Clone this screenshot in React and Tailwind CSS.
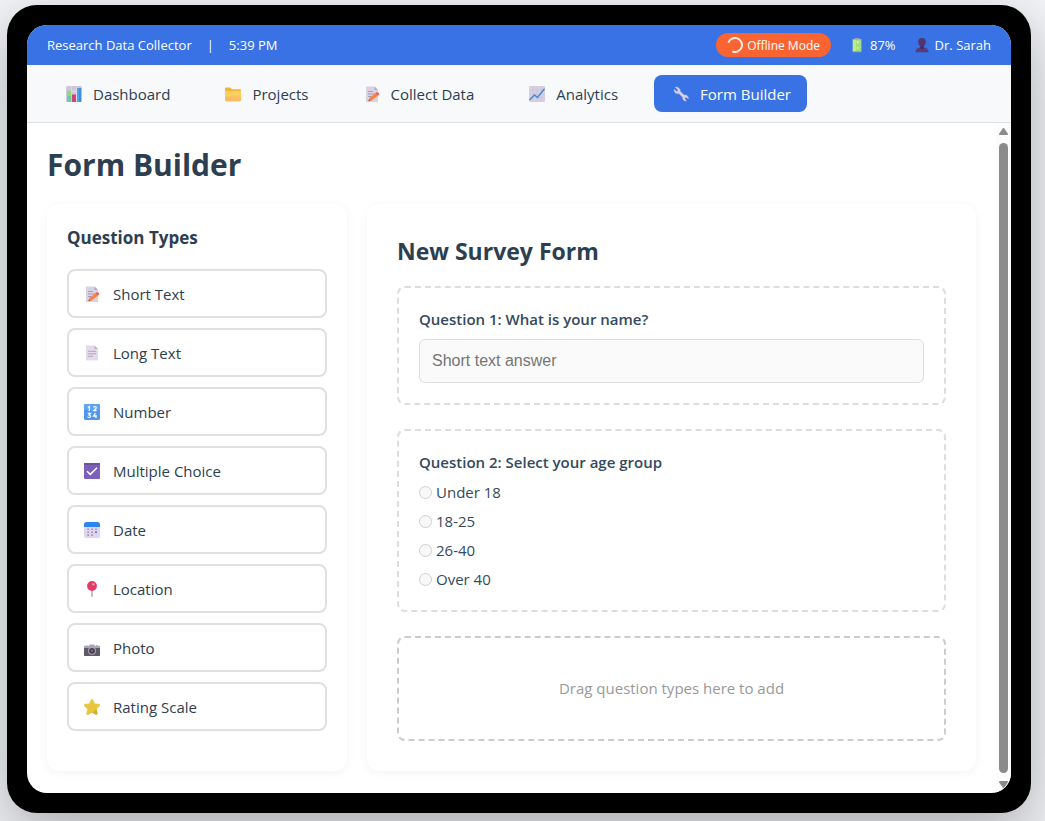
import React from "react";

const svg = (children, size = 16) => (
  <svg width={size} height={size} viewBox="0 0 16 16" aria-hidden="true">
    {children}
  </svg>
);

function ChartIcon() {
  return svg(
    <>
      <rect width="16" height="16" rx="1.5" fill="#cfc6d9" />
      <path d="M0 5.3h16M0 10.6h16M5.3 0v16M10.6 0v16" stroke="#e8e2ee" strokeWidth=".7" />
      <path d="M1 4.5h4.2V16H1z" fill="#8fdc76" />
      <path d="M1 10h4.2v6H1z" fill="#62d3a0" />
      <path d="M6 8.5h4V16H6z" fill="#d53f7c" />
      <path d="M11 2h4.2v14H11z" fill="#3f8ee0" />
      <path d="M11 2h2v14h-2z" fill="#4fa3ea" />
    </>
  );
}

function FolderIcon() {
  return svg(
    <>
      <path d="M0 2.8C0 2 .6 1.5 1.3 1.5h4L7 3.2h7.7c.8 0 1.3.5 1.3 1.3V7H0z" fill="#f5b338" />
      <path d="M0 5h16v9c0 .7-.5 1.2-1.2 1.2H1.2C.5 15.2 0 14.7 0 14z" fill="#fbd060" />
      <path d="M0 10.5h16V14c0 .7-.5 1.2-1.2 1.2H1.2C.5 15.2 0 14.7 0 14z" fill="#f9bc62" />
    </>
  );
}

function MemoIcon() {
  return svg(
    <>
      <path d="M2 .5h8.5L14 4v12H2z" fill="#dad2e3" />
      <path d="M10.5.5 14 4h-3.5z" fill="#b3a8bf" />
      <path d="M4 5.5h5M4 8h7M4 10.5h4" stroke="#a79cb5" strokeWidth="1" />
      <path d="m4.5 15.2 1-3.5 6-4.5 2.3 2.6-6 4.7z" fill="#f98345" />
      <path d="m11.3 7.3 1.4-1c.5-.3 1-.2 1.4.2l.9 1c.4.5.3 1-.1 1.4l-1.2.9z" fill="#e9604f" />
      <path d="m4.5 15.2.5-1.9 1.4 1.5z" fill="#8a4a52" />
    </>
  );
}

function PageIcon() {
  return svg(
    <>
      <path d="M2 .5h8.5L14 4v11.5H2z" fill="#e3daeb" />
      <path d="M10.5.5 14 4h-3.5z" fill="#beb2ca" />
      <path d="M4 6.3h8M4 8.8h8M4 11.3h5" stroke="#aca0ba" strokeWidth=".9" />
    </>
  );
}

function TrendIcon() {
  return svg(
    <>
      <rect width="16" height="16" rx="1" fill="#d8d0e0" />
      <path d="M0 4h16M0 8h16M0 12h16M4 0v16M8 0v16M12 0v16" stroke="#c9c0d3" strokeWidth=".6" />
      <path d="m.5 14 5-5 3 2.500L15.500 2.700" fill="none" stroke="#3c8ad8" strokeWidth="1.400" />
    </>
  );
}

function WrenchIcon() {
  return svg(
    <path
      d="M2.200 1.300 4.700 3.300 5 5 3.500 5.400 1.300 3.400C.9 5.500 2 7.200 4 7.400c.7.100 1.300 0 1.700-.2l4 4c-.3 1.900.8 3.500 2.600 3.700.4.100.8 0 1.100-.1l-1.600-1.700.4-1.500 1.500-.3 1.500 1.500c.4-2-.9-3.600-2.900-3.700-.4 0-.8 0-1.100.1L7.200 5.400C7.400 2.800 5.200.6 2.200 1.300z"
      fill="#d9d0e5"
      stroke="#d9d0e5"
      strokeWidth=".5"
    />
  );
}

function NumbersIcon() {
  return svg(
    <>
      <rect width="16" height="16" rx="1.500" fill="#4e96ee" />
      <path d="M0 1.500C0 .6.600 0 1.500 0H14.500C15.400 0 16 .6 16 1.500V6H0z" fill="#5ba5f4" />
      <g fill="none" stroke="#fff" strokeWidth="1.200">
        <path d="m3.800 3.300 1.500-.8V7.100" />
        <path d="M9.600 3.600c.2-1.500 2.700-1.500 2.700.1 0 1-1.300 1.700-2.600 2.900h2.900" />
        <path d="M3.700 9.400h2.800L5 11c2.300.1 1.900 2.500.3 2.500-.9 0-1.400-.4-1.600-.9" />
        <path d="m11.300 9-1.800 3.200h3.300M12 10.700v3.200" />
      </g>
    </>
  );
}

function CheckIcon() {
  return svg(
    <>
      <rect width="16" height="16" rx="1" fill="#7d5fbd" />
      <path d="M0 1h16" stroke="#6c5499" strokeWidth="2" />
      <path d="m3 8.200 3.300 3.200L13 4.800" fill="none" stroke="#fff" strokeWidth="1.500" />
    </>
  );
}

function CalendarIcon() {
  return svg(
    <>
      <rect y="1" width="16" height="15" rx="2.500" fill="#dfd5ec" />
      <path d="M0 5V2.500C0 1 1 0 2.500 0h11C15 0 16 1 16 2.500V5z" fill="#2f83ee" />
      <path
        d="M3.300 7.300h9.700M3.300 10.200h9.700M3.300 13.100h6"
        stroke="#a598b8"
        strokeWidth="1.600"
        strokeDasharray="1.700 2.200"
      />
      <path d="M11.100 9.400h1.700V11h-1.700z" fill="#2f83ee" />
    </>
  );
}

function PinIcon() {
  return svg(
    <>
      <path d="M7.300 8h1.400v7.500c0 .6-1.400.6-1.400 0z" fill="#a99db6" />
      <circle cx="8" cy="5" r="4.900" fill="#e33a66" />
      <circle cx="9.300" cy="3.200" r="1.300" fill="#f88ba0" />
    </>
  );
}

function CameraIcon() {
  return svg(
    <>
      <path d="M1.500 5.500h3V7h-3zM5 5.800 6 4.500h4l1 1.300V7H5zM12 5.300h2.500V7H12z" fill="#aaa3b1" />
      <rect y="6" width="16" height="10" rx=".8" fill="#605a68" />
      <path d="M0 6.800C0 6.300.3 6 .8 6h14.400c.5 0 .8.300.8.800V8H0z" fill="#aca6b3" />
      <circle cx="8" cy="10.800" r="4" fill="#aaa3b3" />
      <circle cx="8" cy="10.800" r="2.900" fill="#453c50" />
      <circle cx="8" cy="10.800" r="1.200" fill="#776a85" />
    </>
  );
}

function StarIcon() {
  return svg(
    <>
      <path
        d="M7.200.7c.4-.8 1.200-.8 1.600 0l1.900 4 4.400.5c.9.100 1.200 1 .6 1.600l-3.200 3.100.8 4.700c.1.900-.6 1.400-1.400 1L8 13.500l-3.900 2.100c-.8.400-1.500-.1-1.400-1l.8-4.700L.3 6.800c-.6-.6-.3-1.500.6-1.600l4.400-.5z"
        fill="#e7c53c"
        stroke="#e7c53c"
        strokeWidth=".5"
      />
      <path
        d="m12.500 9.900.8 4.700c.1.900-.6 1.400-1.400 1L8 13.500l-3.900 2.100c-.5.200-1 .1-1.200-.2C7 14 11 12.500 12.500 9.900z"
        fill="#d8ad34"
      />
    </>
  );
}

function BatteryIcon() {
  return svg(
    <>
      <path d="M5.500 1h5v2h-5z" fill="#a9a1ad" />
      <rect x="3.800" y="2" width="8.600" height="13" rx=".8" fill="#a5e080" />
      <path d="M3.800 2h3v13h-3z" fill="#bdeb94" />
      <path d="M3.800 14h8.600v1.200H3.800zM3.800 2h8.600v.8H3.800z" fill="#a99fae" />
      <path d="M8 5.200h1.500M8.700 4.500V6M8 11h1.500" stroke="#fff" strokeWidth=".9" />
    </>
  );
}

function PersonIcon() {
  return svg(
    <>
      <path d="M1.500 15.200c0-3 1.800-4.300 5-4.900h3c3.200.6 5 1.900 5 4.900z" fill="#5a3a78" />
      <path d="M6.300 8h3.400v3.500L8 12.500l-1.700-1z" fill="#452b63" />
      <path d="M4.200 4.500C4.200 2 5.800 1 8 1s3.800 1 3.800 3.500C11.800 8 10 9.800 8 9.800S4.200 8 4.200 4.500z" fill="#53346f" />
    </>
  );
}

function SpinnerIcon() {
  return svg(
    <path d="M1.400 5.600A7 7 0 1 1 5.400 14.500" fill="none" stroke="#fff" strokeOpacity=".88" strokeWidth="2" />
  );
}

const tabs = [
  { label: "Dashboard", Icon: ChartIcon },
  { label: "Projects", Icon: FolderIcon },
  { label: "Collect Data", Icon: MemoIcon },
  { label: "Analytics", Icon: TrendIcon },
  { label: "Form Builder", Icon: WrenchIcon, active: true },
];

const types = [
  { label: "Short Text", Icon: MemoIcon },
  { label: "Long Text", Icon: PageIcon },
  { label: "Number", Icon: NumbersIcon },
  { label: "Multiple Choice", Icon: CheckIcon },
  { label: "Date", Icon: CalendarIcon },
  { label: "Location", Icon: PinIcon },
  { label: "Photo", Icon: CameraIcon },
  { label: "Rating Scale", Icon: StarIcon },
];

const ages = ["Under 18", "18-25", "26-40", "Over 40"];

function Label({ children }) {
  return <span className="pt-[2px]">{children}</span>;
}

function StatusBar() {
  return (
    <header className="flex h-10 items-center justify-between bg-[#3872e5] px-5 text-[13px] font-medium text-white">
      <div className="flex items-center gap-[15px]">
        <Label>Research Data Collector</Label>
        <Label>|</Label>
        <Label>5:39 PM</Label>
      </div>
      <div className="flex items-center gap-[18px]">
        <span className="flex h-6 items-center gap-1 rounded-full bg-[#fa6432] px-[11px] text-xs">
          <SpinnerIcon />
          <Label>Offline Mode</Label>
        </span>
        <span className="flex items-center gap-[5px]">
          <BatteryIcon />
          <Label>87%</Label>
        </span>
        <span className="flex items-center gap-[5px]">
          <PersonIcon />
          <Label>Dr. Sarah</Label>
        </span>
      </div>
    </header>
  );
}

function Nav() {
  return (
    <nav className="flex flex-wrap gap-5 border-b border-[#dee2e6] bg-[#f8f9fb] px-5 py-[10px]">
      {tabs.map(({ label, Icon, active }) => (
        <button
          key={label}
          type="button"
          className={
            "flex h-[37px] items-center gap-2 rounded-lg px-4 text-[15px] " +
            (active ? "bg-[#3872e5] text-white" : "text-[#2c3e50]")
          }
        >
          <span className="flex w-[22px] justify-center">
            <Icon />
          </span>
          <Label>{label}</Label>
        </button>
      ))}
    </nav>
  );
}

function QuestionTypes() {
  return (
    <section className="w-[300px] shrink-0 rounded-xl bg-white p-5 shadow-[0_2px_10px_rgba(0,0,0,0.05)]">
      <h2 className="mb-[18px] text-[17px] leading-[27px] font-bold">Question Types</h2>
      <div className="flex flex-col gap-[10px]">
        {types.map(({ label, Icon }) => (
          <button
            key={label}
            type="button"
            className="flex h-[49px] items-center gap-[10px] rounded-lg border-2 border-[#e0e0e0] bg-white px-3 text-left text-[15px]"
          >
            <span className="flex w-[22px] justify-center">
              <Icon />
            </span>
            <Label>{label}</Label>
          </button>
        ))}
      </div>
    </section>
  );
}

function SurveyForm() {
  return (
    <section className="min-w-0 flex-1 rounded-xl bg-white p-[30px] shadow-[0_2px_10px_rgba(0,0,0,0.05)]">
      <h2 className="mb-[18px] text-[23px] leading-[34px] font-bold">New Survey Form</h2>
      <div className="flex flex-col gap-6">
        <div className="rounded-lg border-2 border-dashed border-[#dddddd] p-5">
          <label htmlFor="name" className="mb-[9px] block text-[15px] leading-[22px] font-semibold text-[#34495e]">
            Question 1: What is your name?
          </label>
          <input
            id="name"
            type="text"
            disabled
            placeholder="Short text answer"
            className="block h-11 w-full rounded-md border border-[#dddddd] bg-[#fafafa] px-3 font-['Liberation_Sans',Arial,sans-serif] text-base placeholder:text-[#757575]"
          />
        </div>
        <fieldset className="min-w-0 rounded-lg border-2 border-dashed border-[#dddddd] p-5">
          <legend className="float-left mb-[9px] w-full text-[15px] leading-[22px] font-semibold text-[#34495e]">
            Question 2: Select your age group
          </legend>
          <div className="clear-both flex flex-col gap-2">
            {ages.map((age) => (
              <label key={age} className="flex items-center gap-1 text-[15px] leading-[21px] text-[#34495e]">
                <input
                  type="radio"
                  name="age"
                  disabled
                  className="size-[13px] appearance-none rounded-full border border-[#cfcfcf] bg-[#f8f8f8]"
                />
                {age}
              </label>
            ))}
          </div>
        </fieldset>
        <div className="rounded-lg border-2 border-dashed border-[#cccccc] p-10 text-center text-[15px] leading-[21px] text-[#999999]">
          Drag question types here to add
        </div>
      </div>
    </section>
  );
}

function ScrollTrack() {
  return (
    <div aria-hidden="true" className="flex w-[15px] shrink-0 flex-col items-center gap-2 bg-[#fcfcfc] py-[5px]">
      <svg width="9" height="7" viewBox="0 0 9 7">
        <path d="M3.700.5q.8-.9 1.600 0L8.800 5.500Q9.200 7 8 7H1Q-.2 7 .2 5.500z" fill="#8b8b8b" />
      </svg>
      <div className="w-[9px] flex-1 rounded-full bg-[#8b8b8b]" />
      <svg width="9" height="7" viewBox="0 0 9 7">
        <path d="M3.700 6.500q.8.900 1.600 0L8.800 1.500Q9.200 0 8 0H1Q-.2 0 .2 1.500z" fill="#8b8b8b" />
      </svg>
    </div>
  );
}

export default function App() {
  return (
    <div className="min-h-screen overflow-hidden bg-[#f3f4f8] pt-[5px] pr-[14px] pb-2 pl-[7px] font-['Open_Sans','Noto_Sans',sans-serif] text-[#2c3e50]">
      <div className="rounded-[30px] bg-black p-5 shadow-[0_20px_60px_rgba(0,0,0,0.3)]">
        <div className="overflow-hidden rounded-[20px] bg-white">
          <StatusBar />
          <Nav />
          <div className="flex">
            <main className="min-w-0 flex-1 px-5 pt-5 pb-[22px]">
              <h1 className="mb-[18px] text-[30px] leading-[43px] font-bold">Form Builder</h1>
              <div className="flex gap-5">
                <QuestionTypes />
                <SurveyForm />
              </div>
            </main>
            <ScrollTrack />
          </div>
        </div>
      </div>
    </div>
  );
}
